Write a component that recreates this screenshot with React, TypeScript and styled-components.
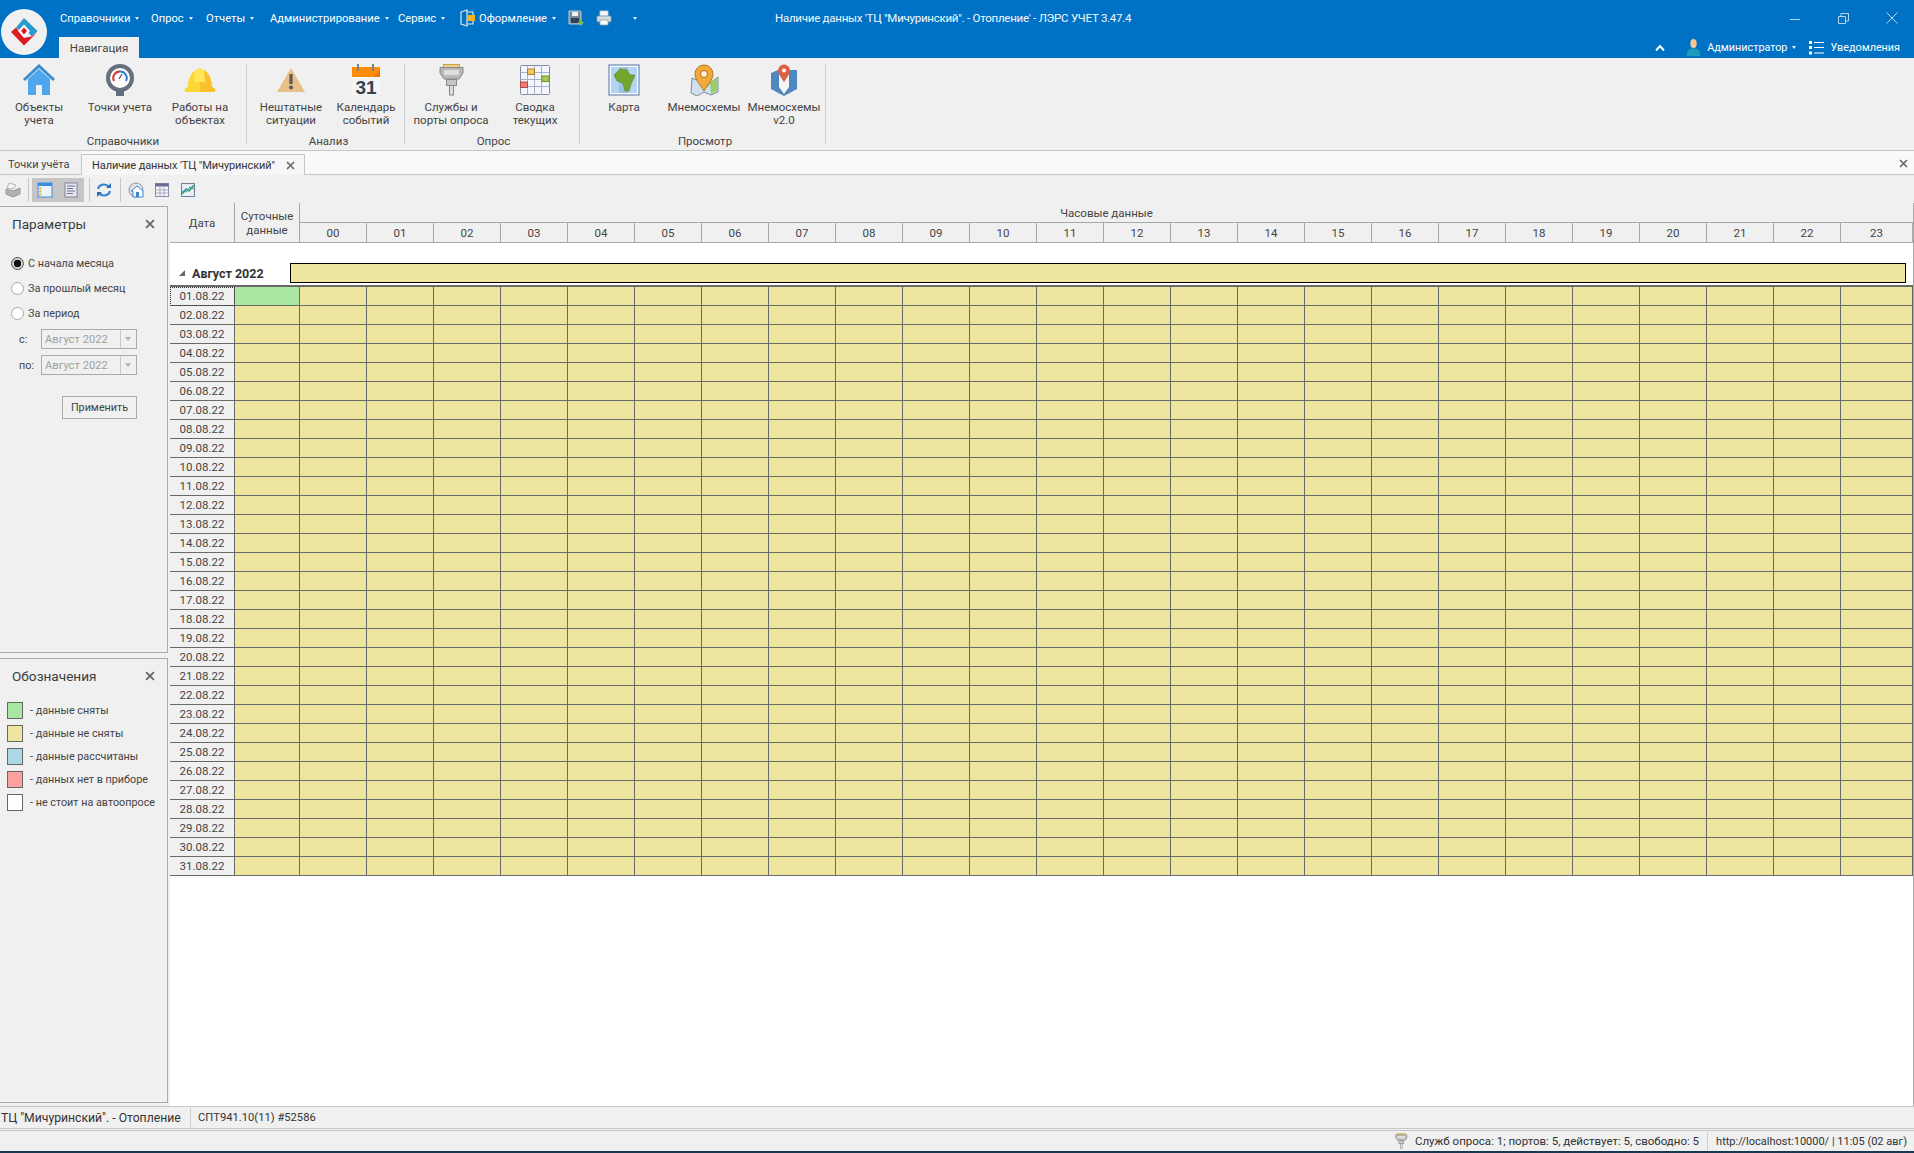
import React from "react";
import styled, { createGlobalStyle } from "styled-components";

const GlobalStyle = createGlobalStyle`
  html, body { margin: 0; padding: 0; height: 100%; overflow: hidden; background: #f0f0f0; }
  body { font-family: Roboto, "Noto Sans", sans-serif; font-size: 11.5px; color: #444; }
`;

const menuItems = [
  { label: "Справочники", width: 91 },
  { label: "Опрос", width: 55 },
  { label: "Отчеты", width: 64 },
  { label: "Администрирование", width: 128 },
];

const hours = Array.from({ length: 24 }, (_, i) => String(i).padStart(2, "0"));
const days = Array.from({ length: 31 }, (_, i) => String(i + 1).padStart(2, "0") + ".08.22");

const legend = [
  { color: "#a8e6a1", label: "- данные сняты" },
  { color: "#eee69e", label: "- данные не сняты" },
  { color: "#add8e6", label: "- данные рассчитаны" },
  { color: "#ffa0a0", label: "- данных нет в приборе" },
  { color: "#ffffff", label: "- не стоит на автоопросе" },
];

function Logo() {
  return (
    <svg width="46" height="46" viewBox="0 0 46 46">
      <circle cx="23" cy="23" r="23" fill="#f0f0f0" />
      <path d="M15 18.500 L23 9 L36.500 22 L30.500 27.500 L23 17 L19.500 22 Z" fill="#2b9ad0" />
      <path d="M10 23 L15 18.500 L23 29 L30.500 27.500 L36.500 23 L23 36.500 Z" fill="#dc1c24" />
      <path d="M23 15.500 L29 22 L23 28.500 L17 22 Z" fill="#fff" />
      <path d="M23 18.500 L26 22 L23 25.500 L20 22 Z" fill="#e0141e" />
    </svg>
  );
}

function HouseIcon() {
  return (
    <svg width="32" height="32" viewBox="0 0 32 32">
      <path d="M5 15 V31 H13 V21 H19 V31 H27 V15 L16 5 Z" fill="#4ea7ee" />
      <path d="M1 16 L16 2 L31 16" fill="none" stroke="#3d8bd0" strokeWidth="3" />
    </svg>
  );
}

function GaugeIcon() {
  return (
    <svg width="32" height="32" viewBox="0 0 32 32">
      <rect x="12" y="24" width="8" height="8" fill="#5f6e7e" />
      <circle cx="16" cy="14" r="12" fill="#fff" stroke="#64707e" strokeWidth="4" />
      <path d="M10 17 A6.500 6.500 0 0 1 16 7.500" fill="none" stroke="#d9362c" strokeWidth="2" />
      <path d="M16 7.500 A6.500 6.500 0 0 1 22 17" fill="none" stroke="#2f7fd6" strokeWidth="2" />
      <path d="M15 15 L18 10" stroke="#555" strokeWidth="1.200" />
    </svg>
  );
}

function HatIcon() {
  return (
    <svg width="32" height="32" viewBox="0 0 32 32">
      <path d="M4 23 C4 12 9 6 16 4.500 V28 H3 C-1 28 0 24 4 23 Z" fill="#fdd835" />
      <path d="M28 23 C28 12 23 6 16 4.500 V28 H29 C33 28 32 24 28 23 Z" fill="#fbc02d" />
      <path d="M11 6 L10 18 H21 L20 6 C17 4 14 4 11 6 Z" fill="#ffe757" />
    </svg>
  );
}

function WarningIcon() {
  return (
    <svg width="32" height="32" viewBox="0 0 32 32">
      <path d="M16 4 L30 28 H2 Z" fill="#e9c186" />
      <rect x="14.400" y="10" width="3.200" height="10" fill="#5a5a5a" />
      <circle cx="16" cy="23.500" r="2" fill="#5a5a5a" />
    </svg>
  );
}

function CalendarIcon() {
  return (
    <svg width="32" height="37" viewBox="0 0 32 37">
      <rect x="2" y="3" width="28" height="28" fill="#f4f5f5" />
      <rect x="2" y="3" width="28" height="10" fill="#ff8c05" />
      <path d="M24 13 L30 6 V13 Z" fill="#f26d0c" />
      <rect x="7" y="0" width="2" height="7" fill="#78848c" />
      <rect x="22" y="0" width="2" height="7" fill="#78848c" />
      <text x="16" y="29.500" textAnchor="middle" fontFamily="Liberation Sans, sans-serif" fontWeight="700" fontSize="19" fill="#36424c">31</text>
    </svg>
  );
}

function ConnectorIcon({ size = 32 }: { size?: number }) {
  return (
    <svg width={size} height={size} viewBox="0 0 32 32">
      <rect x="8.500" y=".5" width="16" height="4" fill="#efcf7f" stroke="#c9a24c" />
      <path d="M5 3.500 H28 V9 L24 15 H9 L5 9 Z" fill="#b8b8b8" stroke="#888" />
      <rect x="9" y="6" width="15" height="5" fill="#dedede" />
      <rect x="11.500" y="15.500" width="10" height="6" fill="#c6c6c6" stroke="#888" />
      <rect x="14.500" y="21.500" width="4" height="9.500" fill="#ddd" stroke="#888" />
    </svg>
  );
}

function TableIcon() {
  return (
    <svg width="32" height="32" viewBox="0 0 32 32">
      <rect x="1.500" y="1.500" width="29" height="29" rx="1" fill="#f4f6fb" stroke="#7d8aa8" />
      <path d="M1.500 8.500 H30.500 M1.500 15.500 H30.500 M1.500 22.500 H30.500 M8.500 1.500 V30.500 M15.500 1.500 V30.500 M22.500 1.500 V30.500" stroke="#a5b0ca" />
      <rect x="8.500" y="5" width="7" height="5.500" fill="#f4c46c" stroke="#b5802a" />
      <rect x="23" y="12" width="7" height="5.500" fill="#a6cc50" stroke="#6d8f26" />
      <rect x="1.500" y="18" width="7" height="5.500" fill="#ee7a72" stroke="#b04a44" />
    </svg>
  );
}

function MapIcon() {
  return (
    <svg width="32" height="32" viewBox="0 0 32 32">
      <rect x="1" y="1" width="30" height="30" fill="#fbfcff" stroke="#8095c4" strokeWidth="1.400" />
      <rect x="3" y="3" width="26" height="26" fill="#b2d6f2" />
      <rect x="11" y="3" width="9" height="26" fill="#9cc1e0" />
      <path d="M12 5 L19 6 L22 11 L27 11 L23 20 L21 27 L17 27 L15 19 L9 17 L6 11 Z" fill="#72a52e" stroke="#567f1e" strokeWidth=".6" />
    </svg>
  );
}

function PinMapIcon() {
  return (
    <svg width="32" height="32" viewBox="0 0 32 32">
      <path d="M4 14 L11 17 L16 26 L22 19 L30 13 V28 L23 31 L16 28 L9 32 L3 29 Z" fill="#cfe0ee" stroke="#7d8b9c" />
      <path d="M22 19 L29 14 V27 L23 30 Z" fill="#9ccb6a" />
      <path d="M16 27 C12 20 7 16 7 10 A9 9 0 0 1 25 10 C25 16 20 20 16 27 Z" fill="#f2a93a" stroke="#b47a1e" />
      <circle cx="16" cy="10" r="3.500" fill="#fff3d6" stroke="#a8741c" />
    </svg>
  );
}

function PinMapBlueIcon() {
  return (
    <svg width="32" height="32" viewBox="0 0 32 32">
      <path d="M3 9 L10 6 L16 13 L22 6 L29 6 V25 L16 32 L3 25 Z" fill="#4f86bf" />
      <path d="M11 9 L16 18 L21 9 V23 L16 30 L11 23 Z" fill="#f4f4f4" />
      <path d="M16 18 C13 13 10 10 10 6.500 A6 6 0 0 1 22 6.500 C22 10 19 13 16 18 Z" fill="#e0613f" />
      <circle cx="16" cy="6.500" r="2" fill="#fff" />
    </svg>
  );
}

function DiskIcon() {
  return (
    <svg width="16" height="16" viewBox="0 0 16 16">
      <path d="M1 1 H12 L13 2 V14 H1 Z" fill="#7c8794" stroke="#dfe4ea" strokeWidth=".8" />
      <rect x="4" y="2" width="6" height="4" fill="#eef1f4" />
      <rect x="3" y="8" width="8" height="5" fill="#2c4358" />
      <path d="M12 9 V12 H10 L13 16 L16 12 H14 V9 Z" fill="#7dc242" />
    </svg>
  );
}

function PrinterIcon() {
  return (
    <svg width="16" height="16" viewBox="0 0 16 16">
      <rect x="4" y="1" width="8" height="5" fill="#f4f6f8" stroke="#c3ccd6" strokeWidth=".8" />
      <rect x="1" y="6" width="14" height="6" rx="1" fill="#d5dce4" stroke="#8b98a6" strokeWidth=".8" />
      <rect x="4" y="10" width="8" height="5" fill="#fff" stroke="#8b98a6" strokeWidth=".8" />
    </svg>
  );
}

function ThemeIcon() {
  return (
    <svg width="18" height="18" viewBox="0 0 18 18">
      <path d="M2 3 L8 1 V17 L2 15 Z" fill="none" stroke="#dbe8f2" strokeWidth="1.200" />
      <path d="M8 3 H14 V15 H8" fill="none" stroke="#dbe8f2" strokeWidth="1.200" />
      <rect x="9" y="6" width="7" height="6" fill="#f4b51e" />
    </svg>
  );
}

function UserIcon() {
  return (
    <svg width="15" height="17" viewBox="0 0 15 17">
      <ellipse cx="7.500" cy="4.500" rx="3.200" ry="4.500" fill="#f7c98f" />
      <path d="M0.500 17 C0.500 12 3 10 5.500 9.500 H9.500 C12 10 14.500 12 14.500 17 Z" fill="#1b9bb8" />
    </svg>
  );
}

function NotifyIcon() {
  return (
    <svg width="15" height="14" viewBox="0 0 15 14">
      <path d="M0 0 H3 V3 H0 Z M0 5 H3 V8 H0 Z M0 10.500 H3 V13.500 H0 Z" fill="#fff" />
      <path d="M5 1.500 H15 M5 6.500 H15 M5 12 H15" stroke="#fff" strokeWidth="1.200" />
    </svg>
  );
}

function PrintToolIcon() {
  return (
    <svg width="16" height="16" viewBox="0 0 16 16">
      <path d="M4 1 L11 3 L8 7 L2 6 Z" fill="#f4f4f4" stroke="#9a9a9a" strokeWidth=".7" />
      <path d="M1 7 L8 9 L15 6 V12 L8 15 L1 12 Z" fill="#b2b2b2" stroke="#7e7e7e" strokeWidth=".7" />
    </svg>
  );
}

function PanelIcon({ accent }: { accent: boolean }) {
  return accent ? (
    <svg width="16" height="16" viewBox="0 0 16 16">
      <rect x="1" y="1" width="14" height="14" fill="#eaf4fd" stroke="#3a8ede" />
      <rect x="1" y="1" width="14" height="3" fill="#3a8ede" />
      <rect x="2" y="5" width="3" height="9" fill="#f5e48b" />
      <path d="M3 6 V7 M3 9 V10 M3 12 V13" stroke="#d9722a" strokeWidth="1.200" />
    </svg>
  ) : (
    <svg width="16" height="16" viewBox="0 0 16 16">
      <rect x="2" y="1" width="12" height="14" fill="#e8e8f2" stroke="#82829c" />
      <path d="M4 4 H12 M4 6.500 H10 M4 9 H12 M4 11.500 H10" stroke="#70708c" />
    </svg>
  );
}

function RefreshIcon() {
  return (
    <svg width="16" height="16" viewBox="0 0 16 16">
      <path d="M2 7 C3 2 10 1 13 5" fill="none" stroke="#3b86cf" strokeWidth="2.200" />
      <path d="M14 9 C13 14 6 15 3 11" fill="none" stroke="#3b86cf" strokeWidth="2.200" />
      <path d="M10 6 H15 V1 Z M6 10 H1 V15 Z" fill="#2d6fb4" />
    </svg>
  );
}

function HomeToolIcon() {
  return (
    <svg width="16" height="16" viewBox="0 0 16 16">
      <circle cx="8" cy="8" r="7" fill="#dfe4ea" stroke="#8a949e" />
      <path d="M3 9 L9 4 L15 9 V15 H5 V9 Z" fill="#fff" stroke="#3b86cf" />
      <rect x="8" y="10" width="3" height="5" fill="#3b86cf" />
    </svg>
  );
}

function GridToolIcon() {
  return (
    <svg width="16" height="16" viewBox="0 0 16 16">
      <rect x="1.500" y="1.500" width="13" height="13" fill="#f6f6fb" stroke="#8a8aa8" />
      <rect x="1.500" y="1.500" width="13" height="3" fill="#6a6a9a" />
      <path d="M1.500 8 H14.500 M1.500 11 H14.500 M6 4.500 V14.500 M10 4.500 V14.500" stroke="#a8a8c0" />
    </svg>
  );
}

function ChartToolIcon() {
  return (
    <svg width="16" height="16" viewBox="0 0 16 16">
      <rect x="1.500" y="1.500" width="13" height="13" fill="#e9eef5" stroke="#6e7f96" />
      <path d="M2 12 L6 7 L9 9 L14 3" fill="none" stroke="#2fa05a" strokeWidth="1.500" />
      <path d="M2 9 L6 10 L10 5 L14 7" fill="none" stroke="#3b86cf" strokeWidth="1" />
    </svg>
  );
}

function Cross({ size = 9, color = "#666" }: { size?: number; color?: string }) {
  return (
    <svg width={size} height={size} viewBox="0 0 9 9">
      <path d="M1 1 L8 8 M8 1 L1 8" stroke={color} strokeWidth="1.600" />
    </svg>
  );
}

const ribbon = [
  {
    title: "Справочники",
    pad: 0,
    width: 247,
    items: [
      { label: "Объекты учета", w: 78, icon: <HouseIcon /> },
      { label: "Точки учета", w: 84, icon: <GaugeIcon /> },
      { label: "Работы на объектах", w: 76, icon: <HatIcon /> },
    ],
  },
  {
    title: "Анализ",
    pad: 6,
    width: 158,
    items: [
      { label: "Нештатные ситуации", w: 76, icon: <WarningIcon /> },
      { label: "Календарь событий", w: 74, icon: <CalendarIcon /> },
    ],
  },
  {
    title: "Опрос",
    pad: 3,
    width: 175,
    items: [
      { label: "Службы и порты опроса", w: 86, icon: <ConnectorIcon /> },
      { label: "Сводка текущих", w: 82, icon: <TableIcon /> },
    ],
  },
  {
    title: "Просмотр",
    pad: 5,
    width: 246,
    items: [
      { label: "Карта", w: 78, icon: <MapIcon /> },
      { label: "Мнемосхемы", w: 82, icon: <PinMapIcon /> },
      { label: "Мнемосхемы v2.0", w: 78, icon: <PinMapBlueIcon /> },
    ],
  },
];

export default function App() {
  return (
    <>
      <GlobalStyle />
      <Page>
        <TitleBar>
          <LogoSlot>
            <Logo />
          </LogoSlot>
          <TitleBody>
            <TopRow>
              <Menu>
                {menuItems.map((m) => (
                  <MenuItem key={m.label} $w={m.width}>
                    {m.label}
                    <Caret />
                  </MenuItem>
                ))}
                <MenuItem $w={61}>
                  Сервис
                  <Caret />
                </MenuItem>
                <ThemeSlot>
                  <ThemeIcon />
                </ThemeSlot>
                <MenuItem $w={89}>
                  Оформление
                  <Caret />
                </MenuItem>
                <QuickIcon $w={28}>
                  <DiskIcon />
                </QuickIcon>
                <QuickIcon $w={32}>
                  <PrinterIcon />
                </QuickIcon>
                <Caret />
              </Menu>
              <AppTitle>Наличие данных 'ТЦ "Мичуринский". - Отопление' - ЛЭРС УЧЕТ 3.47.4</AppTitle>
              <WindowButtons>
                <svg width="11" height="11" viewBox="0 0 11 11">
                  <path d="M0 6.500 H10" stroke="#b9d4ec" />
                </svg>
                <svg width="11" height="11" viewBox="0 0 11 11">
                  <path d="M.5 3.500 H7.500 V10.500 H.5 Z M3 3.500 V.5 H10.500 V8 H7.500" fill="none" stroke="#b9d4ec" />
                </svg>
                <svg width="12" height="12" viewBox="0 0 12 12">
                  <path d="M.5 .5 L11.500 11.500 M11.500 .5 L.5 11.500" stroke="#b9d4ec" />
                </svg>
              </WindowButtons>
            </TopRow>
            <BottomRow>
              <NavTab>Навигация</NavTab>
              <UserArea>
                <ChevronUp viewBox="0 0 10 8">
                  <path d="M1 6.500 L5 2 L9 6.500" fill="none" stroke="#fff" strokeWidth="2" />
                </ChevronUp>
                <UserIcon />
                <UserName>
                  Администратор
                  <Caret />
                </UserName>
                <NotifyIcon />
                <NotifyLabel>Уведомления</NotifyLabel>
              </UserArea>
            </BottomRow>
          </TitleBody>
        </TitleBar>

        <Ribbon>
          {ribbon.map((g) => (
            <RibbonGroup key={g.title} $w={g.width} $pad={g.pad}>
              <RibbonItems>
                {g.items.map((it) => (
                  <RibbonItem key={it.label} $w={it.w}>
                    <RibbonIcon>{it.icon}</RibbonIcon>
                    <RibbonLabel>{it.label}</RibbonLabel>
                  </RibbonItem>
                ))}
              </RibbonItems>
              <GroupTitle>{g.title}</GroupTitle>
            </RibbonGroup>
          ))}
        </Ribbon>

        <TabRow>
          <PlainTab>Точки учёта</PlainTab>
          <ActiveTab>
            Наличие данных 'ТЦ "Мичуринский"
            <Cross />
          </ActiveTab>
          <TabsClose>
            <Cross />
          </TabsClose>
        </TabRow>

        <Main>
          <Toolbar>
            <ToolSlot $w={25}>
              <PrintToolIcon />
            </ToolSlot>
            <ToolSep $l={3} $r={3} />
            <Pressed>
              <PanelIcon accent />
              <PanelIcon accent={false} />
            </Pressed>
            <ToolSep $l={5} $r={2} />
            <ToolSlot $w={24}>
              <RefreshIcon />
            </ToolSlot>
            <ToolSep $l={4} $r={4} />
            <ToolGroup>
              <HomeToolIcon />
              <GridToolIcon />
              <ChartToolIcon />
            </ToolGroup>
          </Toolbar>

          <Workspace>
            <Sidebar>
              <ParamsPanel>
                <PanelHeader>
                  <PanelTitle>Параметры</PanelTitle>
                  <Cross size={10} />
                </PanelHeader>
                <RadioList>
                  <RadioRow>
                    <Radio $on />С начала месяца
                  </RadioRow>
                  <RadioRow>
                    <Radio />За прошлый месяц
                  </RadioRow>
                  <RadioRow>
                    <Radio />За период
                  </RadioRow>
                </RadioList>
                <ComboRows>
                  <ComboRow>
                    <ComboLabel>с:</ComboLabel>
                    <Combo>
                      Август 2022
                      <ComboArrow />
                    </Combo>
                  </ComboRow>
                  <ComboRow>
                    <ComboLabel>по:</ComboLabel>
                    <Combo>
                      Август 2022
                      <ComboArrow />
                    </Combo>
                  </ComboRow>
                </ComboRows>
                <ApplyRow>
                  <ApplyButton>Применить</ApplyButton>
                </ApplyRow>
              </ParamsPanel>
              <LegendPanel>
                <PanelHeader>
                  <PanelTitle>Обозначения</PanelTitle>
                  <Cross size={10} />
                </PanelHeader>
                <LegendList>
                  {legend.map((l) => (
                    <LegendRow key={l.label}>
                      <Swatch $color={l.color} />
                      {l.label}
                    </LegendRow>
                  ))}
                </LegendList>
              </LegendPanel>
            </Sidebar>

            <GridArea>
              <GridHeader>
                <HeadCell $tall>Дата</HeadCell>
                <HeadCell $tall>
                  Суточные
                  <br />
                  данные
                </HeadCell>
                <HeadSpan>Часовые данные</HeadSpan>
                {hours.map((h) => (
                  <HeadCell key={h}>{h}</HeadCell>
                ))}
              </GridHeader>
              <GroupRow>
                <GroupName>
                  <GroupArrow />
                  Август 2022
                </GroupName>
                <GroupBar />
              </GroupRow>
              <Rows>
                {days.map((d, i) => (
                  <Row key={d}>
                    <DateCell $focus={i === 0}>{d}</DateCell>
                    <DataCell $done={i === 0} />
                    {hours.map((h) => (
                      <DataCell key={h} />
                    ))}
                  </Row>
                ))}
              </Rows>
            </GridArea>
          </Workspace>
        </Main>

        <InfoBar>
          <InfoText $sep>ТЦ "Мичуринский". - Отопление</InfoText>
          <InfoText>СПТ941.10(11) #52586</InfoText>
        </InfoBar>
        <StatusBar>
          <ConnectorIcon size={16} />
          <StatusText>Служб опроса: 1; портов: 5, действует: 5, свободно: 5</StatusText>
          <StatusSep />
          <StatusText $small>http://localhost:10000/ | 11:05 (02 авг)</StatusText>
        </StatusBar>
      </Page>
    </>
  );
}

const Page = styled.div`
  display: flex;
  flex-direction: column;
  width: 1914px;
  height: 1153px;
  overflow: hidden;
  background: #f0f0f0;
`;

const TitleBar = styled.div`
  display: flex;
  height: 58px;
  background: #0072c6;
  color: #fff;
  flex-shrink: 0;
`;

const LogoSlot = styled.div`
  width: 60px;
  padding: 9px 0 0 1px;
  box-sizing: border-box;
`;

const TitleBody = styled.div`
  flex: 1;
  display: flex;
  flex-direction: column;
`;

const TopRow = styled.div`
  height: 37px;
  display: flex;
  align-items: center;
  padding-bottom: 1px;
  box-sizing: border-box;
`;

const Menu = styled.div`
  display: flex;
  align-items: center;
  width: 715px;
  font-size: 11.2px;
`;

const MenuItem = styled.div<{ $w: number }>`
  width: ${(p) => p.$w}px;
  white-space: nowrap;
  display: flex;
  align-items: center;
`;

const ThemeSlot = styled.div`
  width: 20px;
  display: flex;
`;

const QuickIcon = styled.div<{ $w: number }>`
  width: ${(p) => p.$w}px;
  display: flex;
`;

const Caret = styled.span`
  display: inline-block;
  width: 0;
  height: 0;
  margin-left: 5px;
  border-left: 2.5px solid transparent;
  border-right: 2.5px solid transparent;
  border-top: 3px solid #e6f0f8;
`;

const AppTitle = styled.div`
  white-space: nowrap;
  color: #f4f8fc;
  letter-spacing: -0.25px;
`;

const WindowButtons = styled.div`
  margin-left: auto;
  display: flex;
  align-items: center;
  gap: 37px;
  padding-right: 16px;
`;

const BottomRow = styled.div`
  height: 21px;
  display: flex;
  justify-content: space-between;
`;

const NavTab = styled.div`
  width: 80px;
  margin-left: -1px;
  background: #f0f0f0;
  color: #444;
  display: flex;
  align-items: center;
  justify-content: center;
`;

const UserArea = styled.div`
  display: flex;
  align-items: center;
  padding-right: 14px;
  font-size: 10.8px;
`;

const ChevronUp = styled.svg`
  width: 10px;
  height: 8px;
  margin-right: 21px;
`;

const UserName = styled.div`
  margin: 0 13px 0 6px;
  display: flex;
  align-items: center;
  white-space: nowrap;
`;

const NotifyLabel = styled.div`
  margin-left: 6px;
  white-space: nowrap;
`;

const Ribbon = styled.div`
  display: flex;
  height: 92px;
  padding: 6px 0;
  box-sizing: border-box;
  background: #f0f0f0;
  flex-shrink: 0;
`;

const RibbonGroup = styled.div<{ $w: number; $pad: number }>`
  width: ${(p) => p.$w}px;
  padding-left: ${(p) => p.$pad}px;
  box-sizing: border-box;
  border-right: 1px solid #cfcfcf;
  display: flex;
  flex-direction: column;
`;

const RibbonItems = styled.div`
  display: flex;
  flex: 1;
`;

const RibbonItem = styled.div<{ $w: number }>`
  width: ${(p) => p.$w}px;
  display: flex;
  flex-direction: column;
  align-items: center;
`;

const RibbonIcon = styled.div`
  height: 32px;
  margin-bottom: 5px;
`;

const RibbonLabel = styled.div`
  padding: 0 4px;
  text-align: center;
  line-height: 13px;
`;

const GroupTitle = styled.div`
  text-align: center;
  line-height: 14px;
  height: 14px;
  margin-bottom: -4px;
`;

const TabRow = styled.div`
  display: flex;
  align-items: flex-end;
  height: 25px;
  box-sizing: border-box;
  border-top: 1px solid #c6c6c6;
  border-bottom: 1px solid #c6c6c6;
  background: #f8f9fb;
  flex-shrink: 0;
`;

const PlainTab = styled.div`
  width: 81px;
  height: 23px;
  padding: 3px 0 0 8px;
  box-sizing: border-box;
  display: flex;
  align-items: center;
  background: #f0f0f0;
  font-size: 11px;
`;

const ActiveTab = styled.div`
  width: 224px;
  height: 21px;
  margin-bottom: -1px;
  padding: 0 9px 0 10px;
  box-sizing: border-box;
  display: flex;
  align-items: center;
  justify-content: space-between;
  white-space: nowrap;
  color: #333;
  font-size: 11px;
  letter-spacing: -0.1px;
  background: #f6f6f6;
  border: 1px solid #c6c6c6;
  border-bottom: 0;
`;

const TabsClose = styled.div`
  margin-left: auto;
  padding: 0 6px 6px 0;
  display: flex;
`;

const Main = styled.div`
  flex: 1;
  display: flex;
  flex-direction: column;
  min-height: 0;
`;

const Toolbar = styled.div`
  height: 28px;
  display: flex;
  align-items: center;
  padding-top: 2px;
  box-sizing: border-box;
  flex-shrink: 0;
`;

const ToolSlot = styled.div<{ $w: number }>`
  width: ${(p) => p.$w}px;
  display: flex;
  justify-content: center;
`;

const ToolSep = styled.div<{ $l: number; $r: number }>`
  width: 1px;
  height: 24px;
  margin: 0 ${(p) => p.$r}px 0 ${(p) => p.$l}px;
  background: #c8c8c8;
`;

const Pressed = styled.div`
  width: 52px;
  height: 24px;
  display: flex;
  align-items: center;
  justify-content: space-around;
  background: #c6c6c6;
`;

const ToolGroup = styled.div`
  display: flex;
  gap: 10px;
  padding-left: 3px;
`;

const Workspace = styled.div`
  flex: 1;
  display: flex;
  min-height: 0;
`;

const Sidebar = styled.div`
  width: 168px;
  padding-top: 3px;
  box-sizing: border-box;
  display: flex;
  flex-direction: column;
  gap: 5px;
  flex-shrink: 0;
  font-size: 10.8px;
`;

const ParamsPanel = styled.div`
  height: 447px;
  box-sizing: border-box;
  border: 1px solid #aaa;
  border-left: 0;
`;

const LegendPanel = styled.div`
  height: 445px;
  box-sizing: border-box;
  border: 1px solid #aaa;
  border-left: 0;
`;

const PanelHeader = styled.div`
  height: 34px;
  padding: 0 12px;
  display: flex;
  align-items: center;
  justify-content: space-between;
  box-sizing: border-box;
`;

const PanelTitle = styled.div`
  font-size: 13.6px;
  color: #3c3c3c;
`;

const RadioList = styled.div`
  margin-top: 10px;
  padding-left: 11px;
  display: flex;
  flex-direction: column;
`;

const RadioRow = styled.div`
  height: 25px;
  display: flex;
  align-items: center;
  gap: 4px;
`;

const Radio = styled.span<{ $on?: boolean }>`
  width: 13px;
  height: 13px;
  border-radius: 50%;
  box-sizing: border-box;
  border: 1px solid ${(p) => (p.$on ? "#555" : "#a8a8a8")};
  background: ${(p) => (p.$on ? "radial-gradient(circle, #111 0 3.5px, #cfcfcf 4px)" : "#fff")};
`;

const ComboRows = styled.div`
  margin-top: 3px;
  display: flex;
  flex-direction: column;
  gap: 6px;
`;

const ComboRow = styled.div`
  display: flex;
  align-items: center;
`;

const ComboLabel = styled.div`
  width: 41px;
  padding-left: 19px;
  box-sizing: border-box;
`;

const Combo = styled.div`
  width: 96px;
  height: 20px;
  box-sizing: border-box;
  border: 1px solid #aaa;
  padding-left: 3px;
  color: #a0a0a0;
  font-size: 11.2px;
  display: flex;
  align-items: center;
  justify-content: space-between;
`;

const ComboArrow = styled.span`
  width: 16px;
  height: 18px;
  box-sizing: border-box;
  border-left: 1px solid #c8c8c8;
  position: relative;
  &::after {
    content: "";
    position: absolute;
    left: 4px;
    top: 7px;
    border-left: 3.5px solid transparent;
    border-right: 3.5px solid transparent;
    border-top: 4px solid #b0b0b0;
  }
`;

const ApplyRow = styled.div`
  margin-top: 21px;
  padding-left: 62px;
`;

const ApplyButton = styled.button`
  width: 75px;
  height: 23px;
  padding: 0;
  border: 1px solid #aaa;
  background: #f0f0f0;
  font: inherit;
  color: #444;
`;

const LegendList = styled.div`
  margin-top: 9px;
  padding-left: 7px;
  display: flex;
  flex-direction: column;
  gap: 6px;
`;

const LegendRow = styled.div`
  display: flex;
  align-items: center;
  gap: 7px;
  height: 17px;
  white-space: nowrap;
`;

const Swatch = styled.span<{ $color: string }>`
  width: 16px;
  height: 17px;
  box-sizing: border-box;
  border: 1px solid #666;
  background: ${(p) => p.$color};
`;

const GridArea = styled.div`
  flex: 1;
  margin-left: 2px;
  background: #fff;
  display: flex;
  flex-direction: column;
  border-right: 1px solid #aaa;
  box-sizing: border-box;
`;

const columns = "65px 65px repeat(23, 67px) 72px";

const GridHeader = styled.div`
  display: grid;
  grid-template-columns: ${columns};
  grid-template-rows: 20px 20px;
  background: #f0f0f0;
`;

const HeadCell = styled.div<{ $tall?: boolean }>`
  grid-row: ${(p) => (p.$tall ? "span 2" : "auto")};
  display: flex;
  align-items: center;
  justify-content: center;
  text-align: center;
  line-height: 14px;
  padding-top: 1px;
  box-sizing: border-box;
  border-right: 1px solid #a8a8a8;
  border-bottom: 1px solid #a8a8a8;
`;

const HeadSpan = styled.div`
  grid-column: 3 / -1;
  display: flex;
  align-items: center;
  justify-content: center;
  box-sizing: border-box;
  border-bottom: 1px solid #a8a8a8;
`;

const GroupRow = styled.div`
  height: 42px;
  display: flex;
  align-items: flex-end;
  padding-bottom: 2px;
  box-sizing: border-box;
`;

const GroupName = styled.div`
  width: 120px;
  height: 20px;
  display: flex;
  align-items: center;
  font-weight: 700;
  font-size: 12.5px;
  color: #333;
  white-space: nowrap;
  padding-left: 9px;
  box-sizing: border-box;
`;

const GroupArrow = styled.span`
  width: 0;
  height: 0;
  margin-right: 7px;
  border-left: 6px solid transparent;
  border-bottom: 6px solid #666;
`;

const GroupBar = styled.div`
  width: 1616px;
  height: 20px;
  box-sizing: border-box;
  border: 1px solid #000;
  background: #eee69e;
`;

const Rows = styled.div`
  border-top: 2px solid #696969;
`;

const Row = styled.div`
  display: grid;
  grid-template-columns: ${columns};
  height: 19px;
`;

const DateCell = styled.div<{ $focus?: boolean }>`
  display: flex;
  align-items: center;
  justify-content: center;
  box-sizing: border-box;
  background: #f0f0f0;
  color: #444;
  border-right: 1px solid #696969;
  border-bottom: 1px solid #696969;
  outline: ${(p) => (p.$focus ? "1px dotted #333" : "none")};
  outline-offset: -1px;
`;

const DataCell = styled.div<{ $done?: boolean }>`
  box-sizing: border-box;
  background: ${(p) => (p.$done ? "#a8e6a1" : "#eee69e")};
  border-right: 1px solid #696969;
  border-bottom: 1px solid #696969;
`;

const InfoBar = styled.div`
  height: 23px;
  display: flex;
  align-items: center;
  box-sizing: border-box;
  border-top: 1px solid #c6c6c6;
  border-bottom: 1px solid #c6c6c6;
  flex-shrink: 0;
`;

const InfoText = styled.div<{ $sep?: boolean }>`
  height: 20px;
  display: flex;
  align-items: center;
  width: ${(p) => (p.$sep ? "191px" : "auto")};
  padding-left: ${(p) => (p.$sep ? "1px" : "7px")};
  box-sizing: border-box;
  border-right: ${(p) => (p.$sep ? "1px solid #cfcfcf" : "0")};
  font-size: ${(p) => (p.$sep ? "12.2px" : "11.2px")};
  color: #333;
  white-space: nowrap;
`;

const StatusBar = styled.div`
  height: 23px;
  margin-top: 1px;
  display: flex;
  align-items: center;
  justify-content: flex-end;
  padding-right: 7px;
  box-sizing: border-box;
  border-top: 1px solid #c6c6c6;
  border-bottom: 2px solid #17384f;
  flex-shrink: 0;
`;

const StatusText = styled.div<{ $small?: boolean }>`
  margin-left: 6px;
  color: #333;
  white-space: nowrap;
  font-size: ${(p) => (p.$small ? "11px" : "11.5px")};
`;

const StatusSep = styled.div`
  width: 1px;
  height: 18px;
  margin: 0 2px 0 8px;
  background: #cfcfcf;
`;
